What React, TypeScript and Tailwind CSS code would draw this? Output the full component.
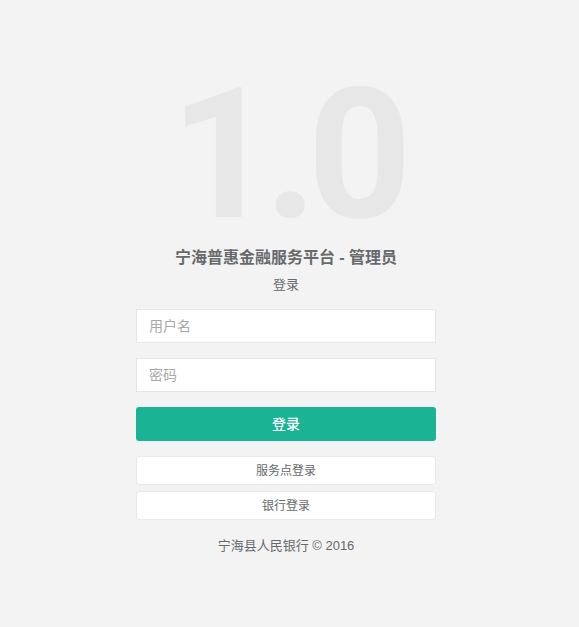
import React from "react";

export default function App() {
  const font = {
    fontFamily: '"Liberation Sans", "Noto Sans CJK SC", sans-serif',
  };
  return (
    <div
      className="min-h-[627px] w-full bg-[#f3f3f4] flex justify-center pr-[7px] text-[#676a6c]"
      style={font}
    >
      <div className="w-[300px] flex flex-col items-center pt-[85px]">
        <div
          className="h-[140px] text-[182px] leading-[140px] font-bold tracking-[-10px] text-[#e6e7e6] select-none"
          style={{ fontFamily: "Roboto, sans-serif" }}
        >
          1.0
        </div>
        <h3 className="mt-[23px] text-[16px] leading-[20px] font-bold text-[#676a6c]">
          宁海普惠金融服务平台 - 管理员
        </h3>
        <p className="mt-[8px] text-[13px] leading-[18px]">登录</p>
        <form className="mt-[15px] w-full flex flex-col" onSubmit={(e) => e.preventDefault()}>
          <input
            type="text"
            placeholder="用户名"
            className="h-[34px] w-full bg-white border border-[#e5e6e7] px-[12px] text-[14px] outline-none placeholder:text-[#a9a9a9]"
          />
          <input
            type="password"
            placeholder="密码"
            className="mt-[15px] h-[34px] w-full bg-white border border-[#e5e6e7] px-[12px] text-[14px] outline-none placeholder:text-[#a9a9a9]"
          />
          <button
            type="submit"
            className="mt-[15px] h-[34px] w-full rounded-[3px] bg-[#1ab394] text-white text-[14px] font-medium"
          >
            登录
          </button>
          <button
            type="button"
            className="mt-[15px] h-[29px] w-full rounded-[3px] bg-white border border-[#e7eaec] text-[12px] text-[#676a6c]"
          >
            服务点登录
          </button>
          <button
            type="button"
            className="mt-[6px] h-[29px] w-full rounded-[3px] bg-white border border-[#e7eaec] text-[12px] text-[#676a6c]"
          >
            银行登录
          </button>
        </form>
        <p className="mt-[17px] text-[13px] leading-[18px]">宁海县人民银行 © 2016</p>
      </div>
    </div>
  );
}
